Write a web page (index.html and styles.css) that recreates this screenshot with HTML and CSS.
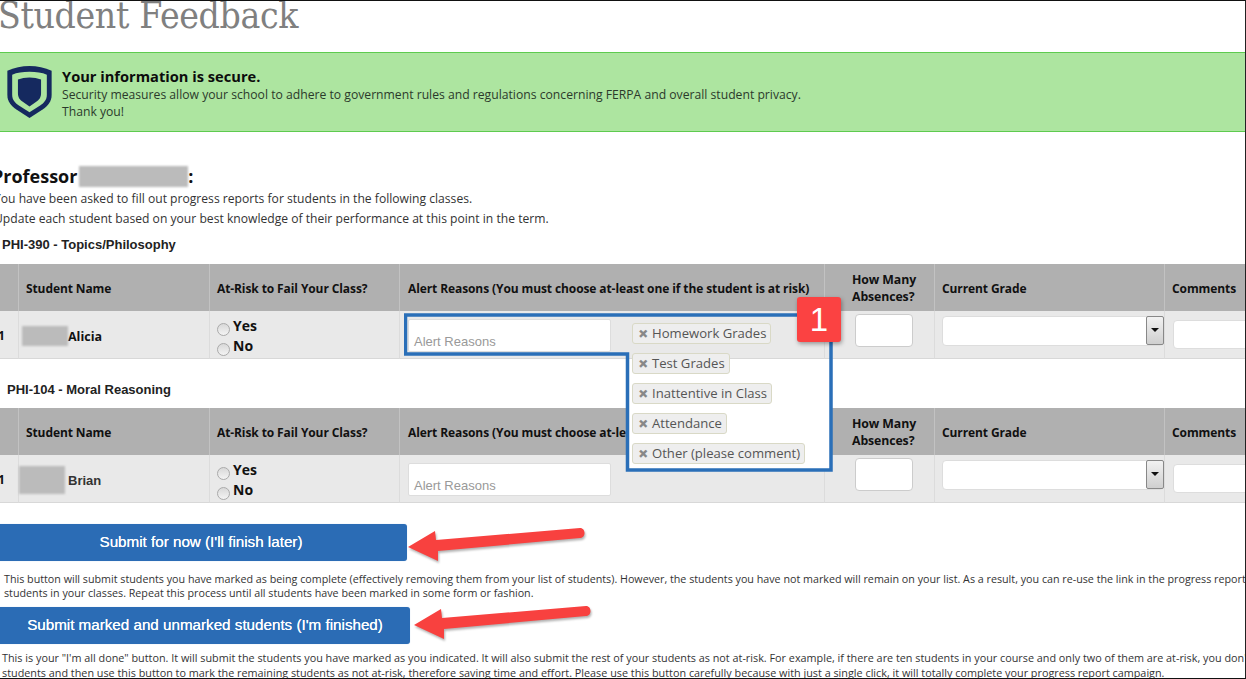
FILE: index.html
```html
<!DOCTYPE html>
<html lang="en">
<head>
<meta charset="utf-8">
<title>Student Feedback</title>
<link rel="stylesheet" href="styles.css">
</head>
<body>
<div class="page">
  <h1 class="title">Student Feedback</h1>
  <section class="secure">
    <svg class="shield" viewBox="0 0 46 54" aria-hidden="true">
      <path d="M23 0 C31 0 39 1.500 46 5 V30 C46 37 42 41 37 45 L23 54 L9 45 C4 41 0 37 0 30 V5 C7 1.500 15 0 23 0Z" fill="#15295f"/>
      <path d="M23 6 C30 6 36 7 41 9 V30 C41 35 38 38 34 41 L23 48 L12 41 C8 38 5 35 5 30 V9 C10 7 16 6 23 6Z" fill="#ade5a0"/>
      <path d="M23 12 C28 12 31 13 35 14 V28 C35 33 33 35 30 37 L23 42 L16 37 C13 35 11 33 11 28 V14 C15 13 18 12 23 12Z" fill="#15295f"/>
    </svg>
    <div class="secure-text">
      <strong>Your information is secure.</strong>
      <p>Security measures allow your school to adhere to government rules and regulations concerning FERPA and overall student privacy.</p>
      <p>Thank you!</p>
    </div>
  </section>

  <h2 class="prof">Professor <span class="blur prof-blur"></span>:</h2>
  <p class="intro">You have been asked to fill out progress reports for students in the following classes.</p>
  <p class="intro">Update each student based on your best knowledge of their performance at this point in the term.</p>

  <h3 class="course">PHI-390 - Topics/Philosophy</h3>
  <div class="grid">
    <div class="th"></div>
    <div class="th">Student Name</div>
    <div class="th">At-Risk to Fail Your Class?</div>
    <div class="th th-alert">Alert Reasons (You must choose at-least one if the student is at risk)</div>
    <div class="th th-abs">How Many Absences?</div>
    <div class="th">Current Grade</div>
    <div class="th">Comments</div>
    <div class="td num">1</div>
    <div class="td name"><span class="blur name-blur"></span><b>Alicia</b></div>
    <div class="td risk">
      <label class="radio"><span class="dot"></span>Yes</label>
      <label class="radio"><span class="dot"></span>No</label>
    </div>
    <div class="td"><div class="reason">Alert Reasons</div></div>
    <div class="td"><div class="absent"></div></div>
    <div class="td"><div class="select"><span class="arrow"></span></div></div>
    <div class="td"><div class="comment"></div></div>
  </div>

  <h3 class="course course-2">PHI-104 - Moral Reasoning</h3>
  <div class="grid">
    <div class="th"></div>
    <div class="th">Student Name</div>
    <div class="th">At-Risk to Fail Your Class?</div>
    <div class="th th-alert">Alert Reasons (You must choose at-least one if the student is at risk)</div>
    <div class="th th-abs">How Many Absences?</div>
    <div class="th">Current Grade</div>
    <div class="th">Comments</div>
    <div class="td num">1</div>
    <div class="td name"><span class="blur name-blur-2"></span><span class="plain">Brian</span></div>
    <div class="td risk">
      <label class="radio"><span class="dot"></span>Yes</label>
      <label class="radio"><span class="dot"></span>No</label>
    </div>
    <div class="td"><div class="reason">Alert Reasons</div></div>
    <div class="td"><div class="absent"></div></div>
    <div class="td"><div class="select"><span class="arrow"></span></div></div>
    <div class="td"><div class="comment"></div></div>
  </div>

  <button class="submit submit-1" type="button">Submit for now (I'll finish later)</button>
  <p class="note">This button will submit students you have marked as being complete (effectively removing them from your list of students). However, the students you have not marked will remain on your list. As a result, you can re-use the link in the progress report email to update students<br>students in your classes. Repeat this process until all students have been marked in some form or fashion.</p>
  <button class="submit submit-2" type="button">Submit marked and unmarked students (I'm finished)</button>
  <p class="note note-2">This is your "I'm all done" button. It will submit the students you have marked as you indicated. It will also submit the rest of your students as not at-risk. For example, if there are ten students in your course and only two of them are at-risk, you don't have to mark all<br>students and then use this button to mark the remaining students as not at-risk, therefore saving time and effort. Please use this button carefully because with just a single click, it will totally complete your progress report campaign.</p>

  <svg class="callout" viewBox="0 0 440 170" aria-hidden="true">
    <path d="M223 47 H427 V157 H223Z" fill="#fff"/>
    <path d="M1.500 2 H427 V157 H223.500 V41 H1.500Z" fill="none" stroke="#2a6fb8" stroke-width="3.500"/>
  </svg>
  <ul class="chips">
    <li class="chip"><span class="x">×</span>Homework Grades</li>
    <li class="chip"><span class="x">×</span>Test Grades</li>
    <li class="chip"><span class="x">×</span>Inattentive in Class</li>
    <li class="chip"><span class="x">×</span>Attendance</li>
    <li class="chip"><span class="x">×</span>Other (please comment)</li>
  </ul>
  <div class="badge">1</div>
  <svg class="arrow-a arrow-1" viewBox="0 0 185 40" aria-hidden="true">
    <path d="M3 22 L30 6 L31 15 L175 3 C181 3 181 13 175 13 L33 26 L33 36Z" fill="#f8413f"/>
  </svg>
  <svg class="arrow-a arrow-2" viewBox="0 0 185 40" aria-hidden="true">
    <path d="M3 22 L30 6 L31 15 L175 3 C181 3 181 13 175 13 L33 26 L33 36Z" fill="#f8413f"/>
  </svg>
</div>
</body>
</html>
```
FILE: styles.css
```css
* { box-sizing: border-box; }
html, body { margin: 0; padding: 0; background: #fff; }
body { width: 1246px; height: 679px; overflow: hidden; }
.page {
  position: relative;
  width: 1246px;
  height: 679px;
  overflow: hidden;
  border-top: 1px solid #111;
  border-right: 1px solid #222;
  border-bottom: 1px solid #111;
  font-family: "Open Sans", sans-serif;
  color: #222;
}
.title {
  margin: -10px 0 0 -2px;
  height: 61px;
  font: 400 37px/50px "DejaVu Serif Condensed", "DejaVu Serif", serif;
  font-stretch: condensed;
  color: #808080;
  letter-spacing: -0.35px;
}
.secure {
  display: flex;
  height: 80px;
  background: #ade5a0;
  border-top: 1px solid #5ecb4f;
  border-bottom: 1px solid #5ecb4f;
  padding: 13px 0 0 7px;
  gap: 10px;
}
.shield { width: 45px; height: 52px; flex: none; }
.secure-text { font-size: 12.18px; line-height: 17px; color: #2b3a2b; padding-top: 1px; }
.secure-text strong { display: block; margin-bottom: 1px; font-size: 14.65px; line-height: 18px; color: #0c0c0c; }
.secure-text p { margin: 0; }
.prof {
  margin: 32px 0 0 -8px;
  font: 700 18px/24px "Open Sans", sans-serif;
  color: #111;
  height: 25px;
}
.blur { display: inline-block; background: #bbb; filter: blur(1px); }
.prof-blur { width: 109px; height: 21px; vertical-align: -4px; margin-left: -3px; }
.intro { margin: 0 0 0 -6px; font-size: 12.13px; line-height: 20px; color: #333; }
.course {
  margin: 6px 0 0 2px;
  font: 700 13px/20px "Liberation Sans", sans-serif;
  color: #222;
  height: 20px;
}
.course-2 { margin: 21px 0 0 7px; }
.grid {
  display: grid;
  width: 1300px;
  margin-top: 9px;
  grid-template-columns: 18px 191px 190px 425px 110px 230px 136px;
  grid-template-rows: 47px 48px;
}
.course-2 + .grid { margin-top: 8px; }
.th {
  display: flex;
  align-items: center;
  background: #b0b0b0;
  border-left: 1px solid #c2c2c2;
  padding: 2px 0 0 7px;
  font-size: 12px;
  font-weight: 700;
  line-height: 17px;
  color: #111;
  letter-spacing: -0.1px;
}
.th:first-child { border-left: 0; }
.th-alert { padding-left: 8px; }
.th-abs { padding: 0 14px 0 27px; font-size: 12.3px; }
.td {
  position: relative;
  background: #e9e9e9;
  border-left: 1px solid #dcdcdc;
  border-bottom: 1px solid #d8d8d8;
  padding-left: 7px;
  display: flex;
  align-items: center;
}
.num { border-left: 0; padding: 2px 0 0; text-indent: -2px; font-size: 12px; font-weight: 700; color: #111; }
.name { font-size: 12.5px; padding: 3px 0 0 3px; color: #111; }
.name b { font-weight: 700; }
.plain { font: 700 13px "Liberation Sans", sans-serif; color: #333; }
.name-blur { width: 46px; height: 20px; }
.name-blur-2 { width: 46px; height: 28px; margin: 0 3px 0 -3px; }
.risk { flex-direction: column; align-items: flex-start; justify-content: center; padding-top: 2px; }
.radio { display: flex; align-items: center; font-size: 14px; line-height: 20px; font-weight: 700; color: #111; gap: 3px; }
.dot {
  width: 13px; height: 13px; margin-top: 7px;
  border-radius: 50%;
  border: 1px solid #aaa;
  background: linear-gradient(#d8d8d8, #f4f4f4);
}
.reason {
  width: 203px; height: 33px;
  margin: 2px 0 0 1px;
  background: #fff;
  border: 1px solid #ddd;
  border-radius: 2px;
  padding: 12px 0 0 5px;
  font: 13px/20px "Liberation Sans", sans-serif;
  color: #999;
}
.absent {
  width: 58px; height: 33px;
  margin: 0 0 9px 23px;
  background: #fff;
  border: 1px solid #ccc;
  border-radius: 4px;
}
.select {
  position: relative;
  width: 222px; height: 30px;
  background: #fff;
  border: 1px solid #ddd;
  border-radius: 4px;
  margin-bottom: 8px;
}
.arrow {
  position: absolute;
  right: -1px; top: -1px; bottom: 0;
  width: 18px;
  background: linear-gradient(#f2f2f2, #cfcfcf);
  border: 1px solid #888;
  border-radius: 2px;
}
.arrow::after {
  content: "";
  position: absolute;
  left: 4px; top: 11px;
  border: 4px solid transparent;
  border-top-color: #111;
}
.comment {
  width: 120px; height: 29px;
  margin-left: 1px;
  background: #fff;
  border: 1px solid #ddd;
  border-radius: 4px;
}
.submit {
  display: block;
  border: 0;
  height: 37px;
  margin-left: -8px;
  padding: 0 0 1px;
  background: #2b6cb5;
  border-radius: 3px;
  color: #fff;
  font: 400 15.2px/34px "Liberation Sans", sans-serif;
  text-shadow: 0 0 .6px #fff;
  box-shadow: 0 0 1px #a9c9e8;
}
.submit-1 { width: 415px; margin-top: 21px; padding-left: 3px; }
.submit-2 { width: 418px; margin-top: 7px; padding-left: 8px; }
.note {
  margin: 11px 0 0 4px;
  width: 1400px;
  font-size: 10.72px;
  line-height: 14px;
  color: #333;
}
.note-2 { margin: 6px 0 0 2px; font-size: 10.82px; line-height: 15px; }
.callout { position: absolute; left: 404px; top: 312px; width: 440px; height: 170px; }
.chips {
  position: absolute;
  left: 632px; top: 322px;
  margin: 0; padding: 0;
  list-style: none;
  display: flex; flex-direction: column; align-items: flex-start;
  gap: 9px;
}
.chip {
  height: 21px;
  padding: 0 4px 0 5px;
  background: #eee;
  border: 1px solid #d9d9c6;
  border-radius: 3px;
  font-size: 13.1px;
  line-height: 19px;
  color: #555;
  display: flex; align-items: center;
}
.x { width: 14px; font-size: 18px; font-weight: 800; color: #888; }
.badge {
  position: absolute;
  left: 797px; top: 296px;
  width: 44px; height: 45px;
  background: #fb4242;
  border-radius: 3px;
  box-shadow: 1px 2px 4px rgba(0,0,0,.35);
  color: #fff;
  font: 400 33px/45px "Liberation Sans", sans-serif;
  text-align: center;
}
.arrow-a { position: absolute; width: 185px; height: 40px; filter: drop-shadow(1px 2px 1px rgba(0,0,0,.3)); }
.arrow-1 { left: 405px; top: 524px; }
.arrow-2 { left: 411px; top: 602px; }
```
